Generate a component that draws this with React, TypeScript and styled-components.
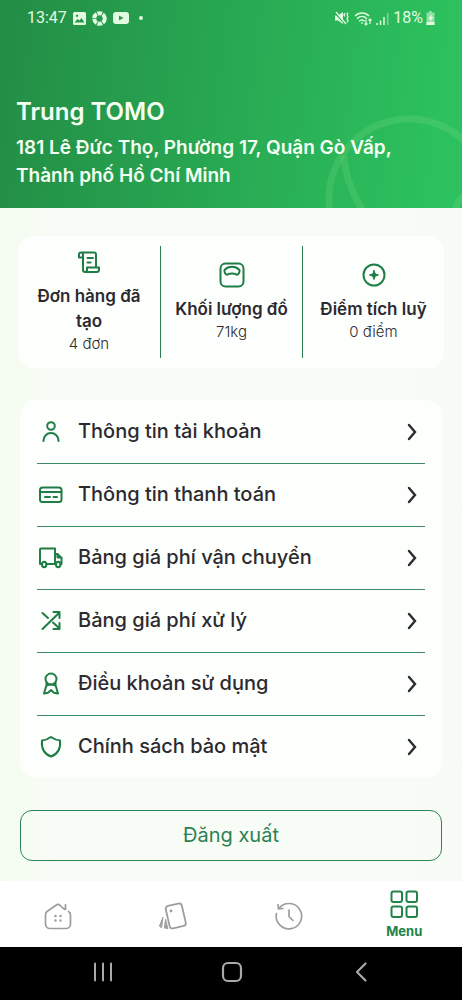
import React from "react";
import styled, { createGlobalStyle } from "styled-components";

const GlobalStyle = createGlobalStyle`
  * { box-sizing: border-box; }
  body {
    margin: 0;
    background: #f6fdf4;
    color: #2d2a2f;
    font-family: Inter, "Open Sans", sans-serif;
  }
  button { font: inherit; color: inherit; cursor: pointer; }
`;

const Screen = styled.div`
  display: flex;
  flex-direction: column;
  min-height: 100vh;
`;

const Header = styled.header`
  position: relative;
  overflow: hidden;
  display: flex;
  flex-direction: column;
  gap: 64px;
  padding: 8px 16px 18px;
  color: #f4fff2;
  background: linear-gradient(97deg, #238d45 0%, #2cc05e 92%);
`;

const Rings = styled.svg`
  position: absolute;
  right: 0;
  bottom: 0;
  width: 140px;
  height: 94px;
`;

const StatusBar = styled.div`
  position: relative;
  display: flex;
  align-items: center;
  justify-content: space-between;
  height: 20px;
  padding: 0 11px;
  font: 400 16px/20px Roboto, sans-serif;
  color: #e2fbe0;
`;

const StatusGroup = styled.div<{ $gap: number }>`
  display: flex;
  align-items: center;
  gap: ${(p) => p.$gap}px;
`;

const Profile = styled.div`
  position: relative;
  display: flex;
  flex-direction: column;
  gap: 2px;
`;

const Name = styled.h1`
  margin: 0;
  font-size: 24px;
  line-height: 40px;
  font-weight: 600;
`;

const Address = styled.p`
  margin: 0;
  font-size: 19px;
  line-height: 28px;
  font-weight: 600;
`;

const Main = styled.main`
  flex: 1;
  display: flex;
  flex-direction: column;
  padding: 28px 20px 20px;
  background: linear-gradient(90deg, #f3fdef 0%, #f8fcf7 12%, #f8fcf7 88%, #f6fbf6 100%);
`;

const Stats = styled.section`
  display: grid;
  grid-template-columns: repeat(3, 1fr);
  margin: 0 -2px;
  padding: 10px 0;
  border-radius: 16px;
  background: #fdfffd;
`;

const Stat = styled.div`
  display: flex;
  flex-direction: column;
  align-items: center;
  justify-content: center;
  min-height: 112px;
  padding: 0 8px 2px;
  text-align: center;
  & + & { border-left: 1px solid #2f7d52; }
  svg { margin-bottom: 8px; }
`;

const StatTitle = styled.strong`
  font-size: 17px;
  line-height: 25px;
  font-weight: 600;
`;

const StatValue = styled.span`
  font-size: 15px;
  line-height: 20px;
  font-weight: 300;
`;

const MenuList = styled.nav`
  display: flex;
  flex-direction: column;
  margin-top: 32px;
  padding: 0 17px;
  border-radius: 16px;
  background: #fdfffd;
`;

const MenuRow = styled.button`
  display: flex;
  align-items: center;
  gap: 13px;
  height: 63px;
  padding: 0 2px 0 0;
  border: 0;
  background: none;
  text-align: left;
  font-size: 20px;
  font-weight: 500;
  & + & { border-top: 1px solid #3d8b62; }
`;

const RowLabel = styled.span`
  flex: 1;
  padding-bottom: 2px;
`;

const Logout = styled.button`
  height: 51px;
  margin-top: 32px;
  padding: 0 0 2px;
  border: 1px solid #2f8455;
  border-radius: 12px;
  background: transparent;
  color: #2b8150;
  font-size: 20px;
  font-weight: 400;
`;

const TabBar = styled.nav`
  display: grid;
  grid-template-columns: repeat(4, 1fr);
  height: 66px;
  background: #ffffff;
`;

const Tab = styled.button<{ $active?: boolean }>`
  display: flex;
  flex-direction: column;
  align-items: center;
  justify-content: center;
  gap: 4px;
  padding: ${(p) => (p.$active ? 2 : 4)}px 0 0;
  border: 0;
  background: none;
  color: ${(p) => (p.$active ? "#22834a" : "#9d9d9d")};
  font-size: 13px;
  line-height: 18px;
  font-weight: 700;
`;

const SystemBar = styled.div`
  display: grid;
  grid-template-columns: repeat(3, 1fr);
  height: 54px;
  padding: 0 36px 4px 38px;
  background: #000000;
`;

const SystemKey = styled.button`
  display: grid;
  place-items: center;
  padding: 0;
  border: 0;
  background: none;
  color: #a9a9a9;
`;

type IconProps = { size?: number; width?: number; children: React.ReactNode };

const Icon = ({ size = 28, width = 2, children }: IconProps) => (
  <svg
    width={size}
    height={size}
    viewBox="0 0 28 28"
    fill="none"
    stroke="currentColor"
    strokeWidth={width}
    strokeLinecap="round"
    strokeLinejoin="round"
    aria-hidden="true"
  >
    {children}
  </svg>
);

const Green = styled.span`
  display: flex;
  color: #1f7d46;
`;

const ScrollIcon = () => (
  <Icon>
    <path d="M7.500 9.500H4V6.500a2 2 0 0 1 4 0v15.500a2 2 0 0 0 2 2M6 4.500h13a2 2 0 0 1 2 2v12M10 24h11.500a2.500 2.500 0 0 0 2.500-2.500V19.500H12v2.500a2 2 0 0 1-2 2M12.500 10h5.500M12.500 14.500h3" />
  </Icon>
);

const ScaleIcon = () => (
  <Icon>
    <rect x="2.500" y="2.500" width="23" height="23" rx="5" />
    <path d="M6.500 9c4-4.200 11-4.200 15 0c.3 2.300-1 4.700-2.800 4.700c-3-1.600-6.400-1.600-9.400 0c-1.800 0-3.100-2.400-2.800-4.700z" />
  </Icon>
);

const PointsIcon = () => (
  <Icon>
    <circle cx="14" cy="14" r="10.500" />
    <path d="M14 9.500l1.200 3.300l3.300 1.200l-3.300 1.200l-1.200 3.300l-1.200-3.300l-3.300-1.200l3.300-1.200z" fill="currentColor" strokeWidth="1" />
  </Icon>
);

const menuItems = [
  {
    label: "Thông tin tài khoản",
    icon: <><circle cx="14" cy="8" r="3.800" /><path d="M6.500 23v-.5a7.500 7.500 0 0 1 15 0v.5" /></>,
  },
  {
    label: "Thông tin thanh toán",
    icon: <><rect x="3" y="6.500" width="21.500" height="14.500" rx="2.500" /><path d="M3 11h21.500M8 16h5M16.500 16h3.500" /></>,
  },
  {
    label: "Bảng giá phí vận chuyển",
    icon: <><path d="M5 20H3V5.500a1 1 0 0 1 1-1H18V20H9.500M18 10h2.500l4 4v6h-1M18 20h1M20.500 10v3.500h4" /><ellipse cx="7.200" cy="20.500" rx="2.200" ry="2.800" /><ellipse cx="21.200" cy="20.500" rx="2.200" ry="2.800" /></>,
  },
  {
    label: "Bảng giá phí xử lý",
    icon: <path d="M5.500 6l5.500 5M5.500 22L22.500 5.500M16.500 5h6v6M16.500 22h6v-6M16 15.500l6.500 6" />,
  },
  {
    label: "Điều khoản sử dụng",
    icon: <><circle cx="14" cy="9" r="5.500" /><path d="M9.500 12.300v2.700l-2.500 8.500l4-.8l3-2.700l3 2.700l4 .8l-2.500-8.500v-2.700M9.500 15.700c3-1.600 6-1.600 9 0" /></>,
  },
  {
    label: "Chính sách bảo mật",
    icon: <path d="M14 4c-2.800 2-5.800 3.200-9 3.500c-.8 7.500 2.200 13.500 9 16c6.800-2.500 9.800-8.500 9-16c-3.200-.3-6.200-1.500-9-3.500z" />,
  },
];

export default function App() {
  return (
    <Screen>
      <GlobalStyle />
      <Header>
        <Rings viewBox="0 0 140 94" fill="none" stroke="#8ee08a" strokeOpacity="0.2" strokeWidth="7" aria-hidden="true">
          <circle cx="87" cy="85" r="80" />
          <path d="M22 42C23 62 30 80 43 100" />
          <circle cx="150" cy="96" r="16" />
        </Rings>
        <StatusBar>
          <StatusGroup $gap={6}>
            <span>13:47</span>
            <svg width="13" height="13" viewBox="0 0 13 13" aria-hidden="true">
              <path fill="currentColor" fillRule="evenodd" d="M1.500 0h10A1.500 1.500 0 0 1 13 1.500v10a1.500 1.500 0 0 1-1.500 1.500h-10A1.500 1.500 0 0 1 0 11.500v-10A1.500 1.500 0 0 1 1.500 0zM1.500 10.500h10L8.500 6L6.500 8.500L4.500 7zM4 2.500a1.200 1.200 0 1 0 .1 0z" />
            </svg>
            <svg width="15" height="15" viewBox="0 0 15 15" fill="none" stroke="currentColor" aria-hidden="true">
              <circle cx="7.500" cy="7.500" r="5.300" strokeWidth="4" strokeDasharray="4.700 .85" />
            </svg>
            <svg width="16" height="12" viewBox="0 0 16 12" aria-hidden="true">
              <path fill="currentColor" fillRule="evenodd" d="M3 0h10a3 3 0 0 1 3 3v6a3 3 0 0 1-3 3H3a3 3 0 0 1-3-3V3a3 3 0 0 1 3-3zM6 3.500v5L10.500 6z" />
            </svg>
            <svg width="14" height="6" viewBox="0 0 14 6" aria-hidden="true">
              <circle cx="6" cy="3" r="2" fill="currentColor" />
            </svg>
          </StatusGroup>
          <StatusGroup $gap={4}>
            <svg width="15" height="14" viewBox="0 0 15 14" fill="none" stroke="currentColor" strokeWidth="1.300" aria-hidden="true">
              <path d="M0 4.500h3L8 1v12L3 9.500H0z" fill="currentColor" stroke="none" />
              <path d="M0 2l10 11" stroke="#2cad57" />
              <path d="M1 1l10 12" />
              <path d="M10 2l-1 2l1 1.500M13 1.500l-1 2l1 2l-1 2l1 2l-1 2" />
            </svg>
            <svg width="18" height="15" viewBox="0 0 18 15" fill="none" stroke="currentColor" strokeWidth="1.500" aria-hidden="true">
              <path d="M1 5c4-4 10-4 14 0M3 7.700c3-2.900 7-2.900 10 0M5.200 10.200c1.500-1.700 4-1.700 5.500 0" />
              <path d="M8 11v2M12 8.500v5.500M10.500 12.500l1.500 1.500l1.500-1.500M16 13V8M14.500 9.500L16 8l1.500 1.500" strokeWidth="1.200" />
            </svg>
            <svg width="13" height="13" viewBox="0 0 13 13" stroke="currentColor" strokeWidth="1.500" aria-hidden="true">
              <path d="M1 13v-2M4.500 13V8.500M8 13V5" />
              <path d="M11.700 13V1" opacity=".45" />
            </svg>
            <StatusGroup $gap={3}>
              <span>18%</span>
              <svg width="9" height="14" viewBox="0 0 9 14" aria-hidden="true">
                <path d="M3 0h3v1.500h2.500V14H.5V1.500H3z" fill="currentColor" opacity=".55" />
                <path d="M.5 11h8v3h-8zM5.500 3L2 8h2v3l3.500-5h-2z" fill="currentColor" />
              </svg>
            </StatusGroup>
          </StatusGroup>
        </StatusBar>
        <Profile>
          <Name>Trung TOMO</Name>
          <Address>181 Lê Đức Thọ, Phường 17, Quận Gò Vấp, Thành phố Hồ Chí Minh</Address>
        </Profile>
      </Header>

      <Main>
        <Stats>
          <Stat>
            <Green><ScrollIcon /></Green>
            <StatTitle>Đơn hàng đã tạo</StatTitle>
            <StatValue>4 đơn</StatValue>
          </Stat>
          <Stat>
            <Green><ScaleIcon /></Green>
            <StatTitle>Khối lượng đồ</StatTitle>
            <StatValue>71kg</StatValue>
          </Stat>
          <Stat>
            <Green><PointsIcon /></Green>
            <StatTitle>Điểm tích luỹ</StatTitle>
            <StatValue>0 điểm</StatValue>
          </Stat>
        </Stats>

        <MenuList aria-label="Tài khoản">
          {menuItems.map((item) => (
            <MenuRow key={item.label} type="button">
              <Green><Icon>{item.icon}</Icon></Green>
              <RowLabel>{item.label}</RowLabel>
              <svg width="22" height="22" viewBox="0 0 22 22" fill="none" stroke="currentColor" strokeWidth="2.400" strokeLinecap="round" aria-hidden="true">
                <path d="M8 4l6 7l-6 7" />
              </svg>
            </MenuRow>
          ))}
        </MenuList>

        <Logout type="button">Đăng xuất</Logout>
      </Main>

      <TabBar aria-label="Điều hướng">
        <Tab type="button" aria-label="Trang chủ">
          <Icon width={1.7}>
            <path d="M20 7L16 3.300a3 3 0 0 0-4 0L3 9.500a4 4 0 0 0-1.500 3.500v9a4.500 4.500 0 0 0 4.500 4.500h16a4.500 4.500 0 0 0 4.500-4.500v-9a4 4 0 0 0-2-3.500M21.500 2.500v5l-2.500-1.500" />
            <path d="M11.500 14v.1M16.500 14v.1M11.500 18.500v.1M16.500 18.500v.1" strokeWidth="2.500" />
          </Icon>
        </Tab>
        <Tab type="button" aria-label="Thẻ">
          <Icon width={1.8}>
            <rect x="8.500" y="2.500" width="16.500" height="23" rx="3" transform="rotate(-13 16.500 14)" />
            <path d="M12 9v.1" strokeWidth="2.800" />
            <path d="M3.800 15.500L1.300 22a2 2 0 0 0 1 3.500zM6.500 17.500l-1 8.500l3 .5z" fill="currentColor" strokeWidth="1" />
          </Icon>
        </Tab>
        <Tab type="button" aria-label="Lịch sử">
          <Icon width={1.7}>
            <path d="M3.800 6.500A12.700 12.700 0 1 1 1.500 11.500M3 2.500l.5 4.500l4.500-.5M14 8v6.500l4 4" />
          </Icon>
        </Tab>
        <Tab type="button" $active>
          <Icon width={2}>
            <rect x="1.500" y="1.500" width="10.500" height="10.500" rx="2" />
            <rect x="16.500" y="1.500" width="10.500" height="10.500" rx="2" />
            <rect x="1.500" y="16.500" width="10.500" height="10.500" rx="2" />
            <rect x="16.500" y="16.500" width="10.500" height="10.500" rx="2" />
          </Icon>
          Menu
        </Tab>
      </TabBar>

      <SystemBar>
        <SystemKey type="button" aria-label="Recents">
          <Icon width={2}><path d="M6 5.500v17M14 5.500v17M22 5.500v17" /></Icon>
        </SystemKey>
        <SystemKey type="button" aria-label="Home">
          <Icon width={2.2}><rect x="5" y="5" width="18" height="18" rx="5" /></Icon>
        </SystemKey>
        <SystemKey type="button" aria-label="Back">
          <Icon width={2.2}><path d="M18.500 5.500L10 14l8.500 8.500" /></Icon>
        </SystemKey>
      </SystemBar>
    </Screen>
  );
}
